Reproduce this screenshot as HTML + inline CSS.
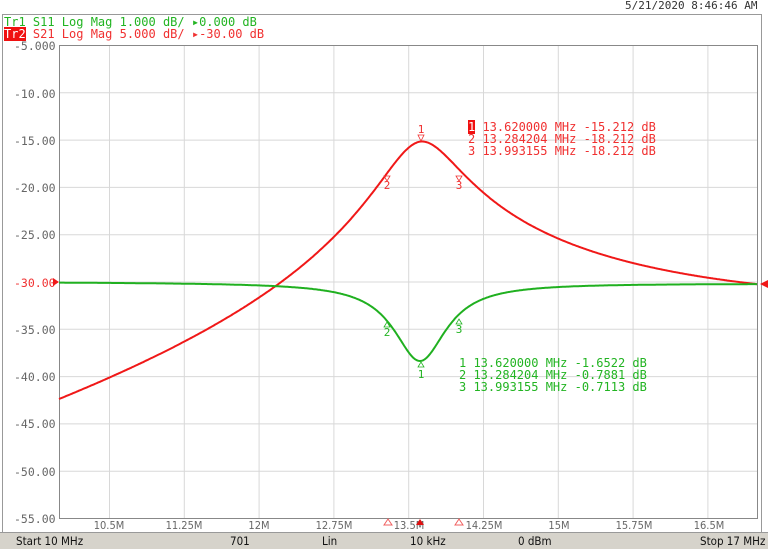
<!DOCTYPE html>
<html><head><meta charset="utf-8"><style>
body{margin:0;width:768px;height:548px;background:#fff;overflow:hidden;position:relative;font-family:"DejaVu Sans Mono","Liberation Mono",monospace}
.t{position:absolute;white-space:pre;font-size:12px;line-height:12px}
.g{color:#22b422}.r{color:#f03030}
.yl{position:absolute;left:14px;width:40px;text-align:right;font-size:11.5px;color:#666;font-family:"DejaVu Sans Mono",monospace}
.xl{position:absolute;top:519px;font-size:11px;color:#666;font-family:"DejaVu Sans Condensed","Liberation Sans Narrow",sans-serif;transform:translateX(-50%)}
#sb{position:absolute;left:0;top:532px;width:768px;height:16px;background:#d6d3cb;border-top:1px solid #999;font-family:"DejaVu Sans Condensed","Liberation Sans",sans-serif;font-size:11.5px;color:#111}
#sb span{position:absolute;top:1px}
</style></head><body>
<div class="t" style="left:625px;top:0;color:#333;font-size:11px">5/21/2020 8:46:46 AM</div>
<div style="position:absolute;left:2px;top:14px;width:758px;height:518px;border-left:1px solid #999;border-top:1px solid #999;border-right:1px solid #999"></div>
<div class="t g" style="left:4px;top:16px">Tr1 S11 Log Mag 1.000 dB/ ▸0.000 dB</div>
<div class="t r" style="left:4px;top:28px"><span style="background:#f01010;color:#fff">Tr2</span> S21 Log Mag 5.000 dB/ ▸-30.00 dB</div>
<div class="yl" style="top:39px">-5.000</div>
<div class="yl" style="top:87px">-10.00</div>
<div class="yl" style="top:134px">-15.00</div>
<div class="yl" style="top:181px">-20.00</div>
<div class="yl" style="top:228px">-25.00</div>
<div class="yl" style="top:276px;color:#f03030">-30.00</div>
<div class="yl" style="top:323px">-35.00</div>
<div class="yl" style="top:370px">-40.00</div>
<div class="yl" style="top:417px">-45.00</div>
<div class="yl" style="top:465px">-50.00</div>
<div class="yl" style="top:512px">-55.00</div>
<div class="xl" style="left:109px">10.5M</div><div class="xl" style="left:184px">11.25M</div><div class="xl" style="left:259px">12M</div><div class="xl" style="left:334px">12.75M</div><div class="xl" style="left:409px">13.5M</div><div class="xl" style="left:484px">14.25M</div><div class="xl" style="left:559px">15M</div><div class="xl" style="left:634px">15.75M</div><div class="xl" style="left:709px">16.5M</div>
<svg id="s" width="768" height="548" style="position:absolute;left:0;top:0" xmlns="http://www.w3.org/2000/svg">
<g stroke="#d8d8d8" stroke-width="1" id="grid"></g>
<rect x="59.5" y="45.5" width="698" height="473" fill="none" stroke="#888"/>
<path id="red" fill="none" stroke="#f01818" stroke-width="2"/>
<path id="grn" fill="none" stroke="#20b020" stroke-width="2"/>
<polygon points="53,278 59,282 53,286" fill="#f01818"/>
<polygon points="768,280 760,284 768,288" fill="#f01818"/>
<g fill="none" stroke="#f06060"><polygon points="384,525 388,519 392,525"/><polygon points="455,525 459,519 463,525"/></g>
<polygon points="416,525 420,519 424,525" fill="#e01010"/>
<g font-size="11" font-family="DejaVu Sans Mono,monospace" text-anchor="middle">
<text x="421" y="133" fill="#f03030">1</text><text x="387" y="189" fill="#f03030">2</text><text x="459" y="189" fill="#f03030">3</text>
<text x="421" y="378" fill="#22b422">1</text><text x="387" y="336" fill="#22b422">2</text><text x="459" y="333" fill="#22b422">3</text>
</g>
<g fill="none" stroke-width="0.8" font-size="0"><polygon points="418,135 424,135 421,141" stroke="#f03030"/><polygon points="384,176 390,176 387,181" stroke="#f03030"/><polygon points="456,176 462,176 459,181" stroke="#f03030"/>
<polygon points="418,367 424,367 421,362" stroke="#22b422"/><polygon points="384,327 390,327 387,322" stroke="#22b422"/><polygon points="456,324 462,324 459,319" stroke="#22b422"/></g>
</svg>
<div class="t r" style="left:468px;top:121px"><span style="background:#f01010;color:#fff">1</span> 13.620000 MHz -15.212 dB
2 13.284204 MHz -18.212 dB
3 13.993155 MHz -18.212 dB</div>
<div class="t g" style="left:459px;top:357px">1 13.620000 MHz -1.6522 dB
2 13.284204 MHz -0.7881 dB
3 13.993155 MHz -0.7113 dB</div>
<div id="sb"><span style="left:16px">Start 10 MHz</span><span style="left:230px">701</span><span style="left:322px">Lin</span><span style="left:410px">10 kHz</span><span style="left:518px">0 dBm</span><span style="left:700px">Stop 17 MHz</span></div>
<script>
var g=document.getElementById('grid'),h='';
for(var i=1;i<10;i++){var y=45.5+i*47.3;h+='<line x1="59" x2="757" y1="'+y+'" y2="'+y+'"/>';}
for(var i=0;i<9;i++){var x=109.5+i*74.8;h+='<line y1="45" y2="518" x1="'+x+'" x2="'+x+'"/>';}
g.innerHTML=h;
var r='',gr='',f0=13.62,hb=0.3545;
for(var i=0;i<=700;i++){var f=10+i*0.01,x=59+(f-10)*99.71,u=(f-f0)/hb;
var db=-15.212-10*Math.log10(1+u*u)+1.93*(f-f0)-(f>f0?0.58*(f-f0):0);
var yr=45+(-5-db)*9.46;
var re=1-0.1735/(1+u*u),im=0.1735*u/(1+u*u);var dg=10*Math.log10(re*re+im*im)-0.05*(f-10)/7*0.6;
var yg=282-dg*47.3;
r+=(i?'L':'M')+x.toFixed(1)+' '+yr.toFixed(1);gr+=(i?'L':'M')+x.toFixed(1)+' '+yg.toFixed(1);}
document.getElementById('red').setAttribute('d',r);document.getElementById('grn').setAttribute('d',gr);
</script>
</body></html>
